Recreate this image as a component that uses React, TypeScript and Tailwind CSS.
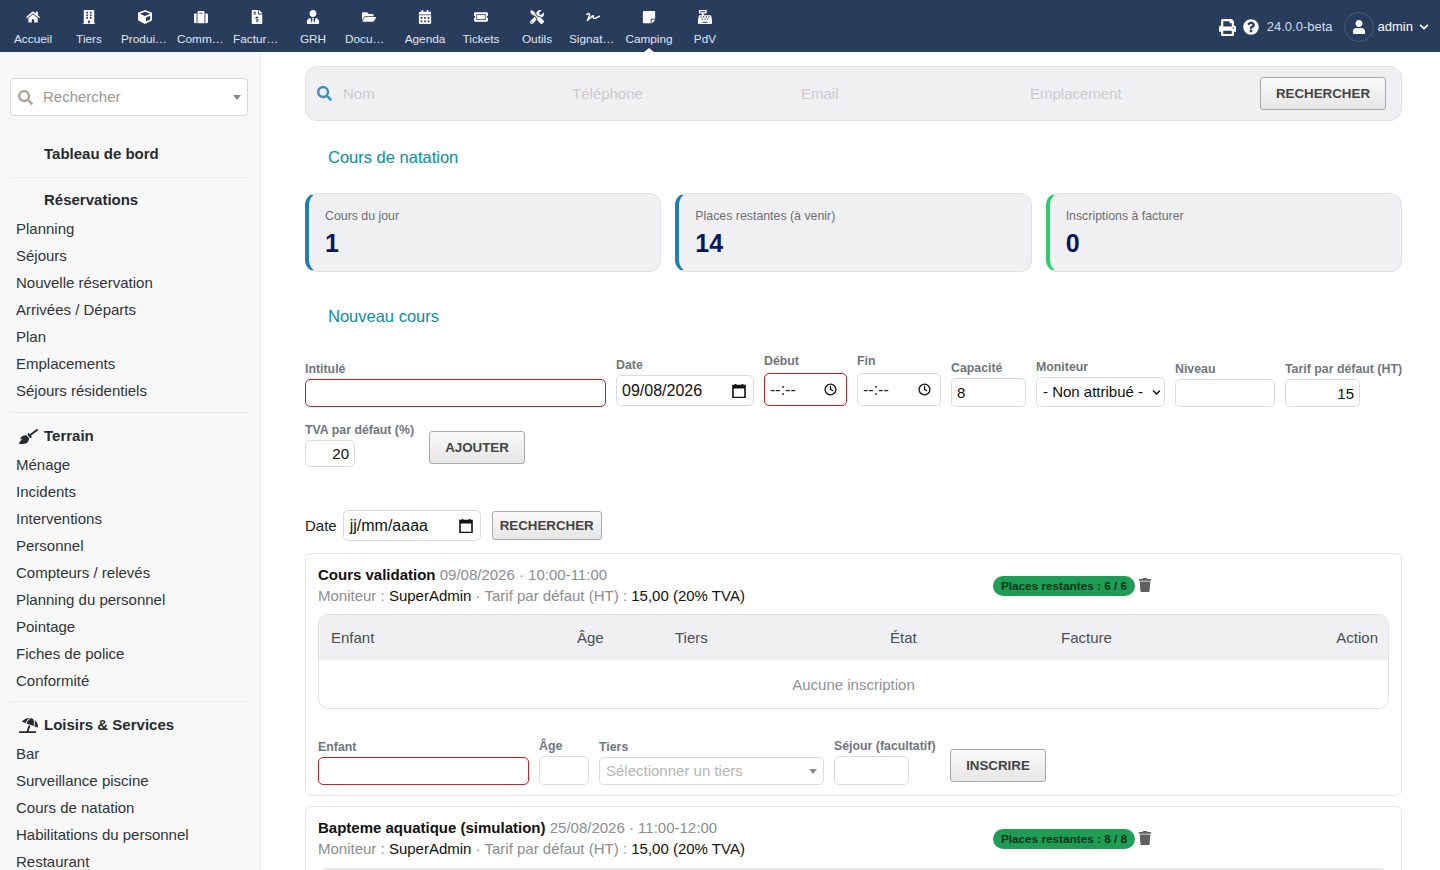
import type { ReactNode } from "react";
import {
  FaHome,
  FaBuilding,
  FaCube,
  FaSuitcase,
  FaFileInvoiceDollar,
  FaUserTie,
  FaFolderOpen,
  FaCalendarAlt,
  FaTicketAlt,
  FaTools,
  FaSignature,
  FaStickyNote,
  FaCashRegister,
  FaPrint,
  FaQuestionCircle,
  FaUser,
  FaSearch,
  FaBroom,
  FaUmbrellaBeach,
  FaTrash,
  FaChevronDown,
} from "react-icons/fa";
import { Clock } from "lucide-react";

const navItems = [
  { label: "Accueil", icon: FaHome },
  { label: "Tiers", icon: FaBuilding },
  { label: "Produi…", icon: FaCube },
  { label: "Comm…", icon: FaSuitcase },
  { label: "Factur…", icon: FaFileInvoiceDollar },
  { label: "GRH", icon: FaUserTie },
  { label: "Docu…", icon: FaFolderOpen },
  { label: "Agenda", icon: FaCalendarAlt },
  { label: "Tickets", icon: FaTicketAlt },
  { label: "Outils", icon: FaTools },
  { label: "Signat…", icon: FaSignature },
  { label: "Camping", icon: FaStickyNote, active: true },
  { label: "PdV", icon: FaCashRegister },
];

const reservations = ["Planning", "Séjours", "Nouvelle réservation", "Arrivées / Départs", "Plan", "Emplacements", "Séjours résidentiels"];
const terrain = ["Ménage", "Incidents", "Interventions", "Personnel", "Compteurs / relevés", "Planning du personnel", "Pointage", "Fiches de police", "Conformité"];
const loisirs = ["Bar", "Surveillance piscine", "Cours de natation", "Habilitations du personnel", "Restaurant"];

const stats = [
  { label: "Cours du jour", value: "1", border: "border-l-[#1f7fb0]" },
  { label: "Places restantes (à venir)", value: "14", border: "border-l-[#1f7fb0]" },
  { label: "Inscriptions à facturer", value: "0", border: "border-l-[#2ecc71]" },
];

const inputBase = "border rounded-[5px] bg-white text-[15px] text-[#111] outline-none";
const okBorder = "border-[#dcdcdc]";
const badBorder = "border-[#c8202a]";
const buttonBase =
  "rounded-[3px] border border-[#a8a8a8] bg-gradient-to-b from-[#fafafa] to-[#e6e6e6] font-bold text-[#444] text-[13.33px]";

function Field({ label, width, children }: { label: string; width: string; children: ReactNode }) {
  return (
    <div className={`flex flex-col ${width}`}>
      <label className="mb-[3px] whitespace-nowrap text-[12.35px] leading-[14px] font-bold text-[#6f7680]">{label}</label>
      {children}
    </div>
  );
}

function MenuGroup({ title, icon, items }: { title: string; icon?: ReactNode; items: string[] }) {
  return (
    <div>
      <div className="flex h-[27px] items-center text-[15px] font-bold text-[#262b33]">
        <span className="flex w-[34px] justify-center pl-[4px] pr-[2px] text-[#262b33]">{icon}</span>
        <span>{title}</span>
      </div>
      <ul className="mt-[2px]">
        {items.map((item) => (
          <li key={item} className="flex h-[27px] items-center pl-[6px] text-[15px] text-[#2f343b]">
            {item}
          </li>
        ))}
      </ul>
    </div>
  );
}

function TimeInput({ invalid }: { invalid?: boolean }) {
  return (
    <div className={`mt-[2px] mb-[1px] flex h-[33px] w-full items-center justify-between border ${invalid ? badBorder : okBorder} rounded-[5px] bg-white pl-[5px] pr-[9px] text-[16px] text-[#222]`}>
      <span>--:--</span>
      <Clock size={13} strokeWidth={2.4} className="text-[#111]" />
    </div>
  );
}

function CalendarIcon() {
  return (
    <svg width="14" height="15" viewBox="0 0 14 15" className="shrink-0">
      <path d="M1 2.5h12v12H1z" fill="none" stroke="#111" strokeWidth="1.6" />
      <path d="M1 2.5h12v3H1z" fill="#111" />
      <path d="M3.5 1v2M10.5 1v2" stroke="#111" strokeWidth="1.6" />
    </svg>
  );
}

function Course({ title, date, places, children }: { title: string; date: string; places: string; children?: ReactNode }) {
  return (
    <section className="mb-[10px] rounded-[6px] border border-[#e6e6e6] bg-white px-[12px] pt-[10px] pb-[10px]">
      <div className="grid grid-cols-[675px_auto]">
        <div className="text-[15px] leading-[21px] text-[#8a8d92]">
          <div>
            <span className="font-bold text-[#111]">{title}</span> {date}
          </div>
          <div>
            Moniteur : <span className="text-[#111]">SuperAdmin</span> · Tarif par défaut (HT) : <span className="text-[#111]">15,00 (20% TVA)</span>
          </div>
        </div>
        <div className="mt-[12px] flex items-start gap-[3px]">
          <span className="flex h-[20px] w-[142px] items-center justify-center rounded-full bg-[#1f9d55] text-[11.75px] font-bold text-[#06351b]">
            Places restantes : {places}
          </span>
          <FaTrash size={14} className="mt-[2px] text-[#5f5f5f]" />
        </div>
      </div>
      {children}
    </section>
  );
}

export default function App() {
  return (
    <div className="flex h-screen flex-col overflow-hidden bg-white font-['Liberation_Sans',Arial,sans-serif]">
      {/* barre du haut */}
      <header className="flex h-[52px] shrink-0 items-start justify-between bg-[#283c5c] pl-[5px]">
        <nav className="flex">
          {navItems.map(({ label, icon: Icon, active }) => (
            <a key={label} className="relative flex h-[52px] w-[56px] flex-col items-center pt-[10px] text-[#e0e6ee]">
              <Icon size={14} className="text-white" />
              <span className={`mt-[8px] w-[48px] whitespace-nowrap text-[11.8px] leading-[14px] ${label.endsWith("…") ? "text-left" : "text-center"}`}>{label}</span>
              {active && <span className="absolute bottom-0 left-1/2 h-0 w-0 -translate-x-1/2 border-x-[5px] border-b-[4px] border-x-transparent border-b-white" />}
            </a>
          ))}
        </nav>
        <div className="flex h-[52px] items-center pt-[2px] pr-[11px] text-[#d5dce6]">
          <FaPrint size={17} className="text-white" />
          <FaQuestionCircle size={16} className="ml-[7px] text-white" />
          <span className="ml-[8px] text-[13px]">24.0.0-beta</span>
          <span className="ml-[11px] flex h-[30px] w-[30px] items-center justify-center rounded-full border border-[#4a5d7c]">
            <FaUser size={14} className="text-white" />
          </span>
          <span className="ml-[4px] text-[13px] text-white">admin</span>
          <FaChevronDown size={10} className="ml-[6px] text-white" />
        </div>
      </header>

      <div className="flex min-h-0 flex-1">
        {/* menu gauche */}
        <aside className="w-[261px] shrink-0 overflow-hidden border-r border-[#f0f0f0] bg-[#f8f8f8] pl-[10px] pr-[12px] pt-[26px]">
          <div className="flex h-[38px] items-center rounded-[4px] border border-[#d9d9d9] bg-white pl-[7px] pr-[6px]">
            <FaSearch size={15} className="text-[#a9a49c]" />
            <span className="ml-[10px] flex-1 text-[15px] text-[#9a9a9a]">Rechercher</span>
            <span className="h-0 w-0 border-x-[4px] border-t-[5px] border-x-transparent border-t-[#888]" />
          </div>
          <div className="mt-[25px] flex h-[27px] items-center pl-[34px] text-[15px] font-bold text-[#262b33]">Tableau de bord</div>
          <div className="mt-[9px] mb-[9px] border-t border-[#ececec]" />
          <MenuGroup title="Réservations" items={reservations} />
          <div className="mt-[7px] mb-[10px] border-t border-[#ececec]" />
          <MenuGroup title="Terrain" icon={<FaBroom size={19} />} items={terrain} />
          <div className="mt-[6px] mb-[10px] border-t border-[#ececec]" />
          <MenuGroup title="Loisirs & Services" icon={<FaUmbrellaBeach size={19} />} items={loisirs} />
        </aside>

        <main className="min-w-0 flex-1 overflow-hidden pt-[14px] pr-[38px] pl-[44px]">
          {/* recherche rapide */}
          <div className="flex h-[55px] items-center rounded-[12px] border border-[#e2e2e4] bg-[#f0f0f2] pl-[11px]">
            <FaSearch size={15} className="shrink-0 text-[#3d8dbd]" />
            <div className="mt-[1px] ml-[11px] flex flex-1">
              {["Nom", "Téléphone", "Email", "Emplacement"].map((p) => (
                <input key={p} placeholder={p} className="w-[229px] bg-transparent text-[15px] outline-none placeholder:text-[#cbcbcd]" />
              ))}
            </div>
            <button className={`${buttonBase} mr-[15px] h-[33px] w-[126px]`}>RECHERCHER</button>
          </div>

          <h2 className="mt-[26px] pl-[23px] text-[16.5px] leading-[20px] text-[#0a8ea0]">Cours de natation</h2>

          <div className="mt-[26px] grid grid-cols-3 gap-[14px]">
            {stats.map((s) => (
              <div key={s.label} className={`h-[79px] rounded-[12px] border border-l-4 border-[#e0e0e2] ${s.border} bg-[#f0f0f2] pt-[14px] pl-[16px]`}>
                <div className="text-[12.35px] leading-[16px] text-[#6b6f76]">{s.label}</div>
                <div className="mt-[4px] text-[25px] leading-[30px] font-bold text-[#0b1560]">{s.value}</div>
              </div>
            ))}
          </div>

          <h2 className="mt-[34px] pl-[23px] text-[16.5px] leading-[20px] text-[#0a8ea0]">Nouveau cours</h2>

          {/* formulaire nouveau cours */}
          <div className="mt-[28px] flex items-end gap-[10px]">
            <Field label="Intitulé" width="w-[301px]">
              <input className={`${inputBase} ${badBorder} h-[28px] w-full`} />
            </Field>
            <Field label="Date" width="w-[138px]">
              <div className={`mb-[1px] flex h-[31px] items-center justify-between rounded-[5px] border ${okBorder} pl-[5px] pr-[7px] text-[16px] text-[#111]`}>
                <span>09/08/2026</span>
                <CalendarIcon />
              </div>
            </Field>
            <Field label="Début" width="w-[83px]">
              <TimeInput invalid />
            </Field>
            <Field label="Fin" width="w-[84px]">
              <TimeInput />
            </Field>
            <Field label="Capacité" width="w-[75px]">
              <input defaultValue="8" className={`${inputBase} ${okBorder} h-[29px] w-full px-[5px]`} />
            </Field>
            <Field label="Moniteur" width="w-[129px]">
              <div className={`flex h-[30px] items-center justify-between rounded-[5px] border ${okBorder} pl-[6px] pr-[3px] text-[15px] text-[#111]`}>
                <span className="whitespace-nowrap">- Non attribué -</span>
                <FaChevronDown size={9} className="text-[#111]" />
              </div>
            </Field>
            <Field label="Niveau" width="w-[100px]">
              <input className={`${inputBase} ${okBorder} h-[28px] w-full`} />
            </Field>
            <Field label="Tarif par défaut (HT)" width="w-[117px]">
              <input defaultValue="15" className={`${inputBase} ${okBorder} h-[28px] w-[75px] px-[5px] text-right`} />
            </Field>
          </div>
          <div className="mt-[16px] flex items-end">
            <Field label="TVA par défaut (%)" width="w-[109px]">
              <input defaultValue="20" className={`${inputBase} ${okBorder} h-[27px] w-[50px] px-[5px] text-right`} />
            </Field>
            <button className={`${buttonBase} ml-[15px] mb-[3px] h-[33px] w-[96px]`}>AJOUTER</button>
          </div>

          {/* filtre par date */}
          <div className="mt-[43px] flex items-center">
            <span className="pt-[1px] text-[15px] text-[#222]">Date</span>
            <div className={`ml-[6px] flex h-[31px] w-[138px] items-center justify-between rounded-[5px] border ${okBorder} pl-[6px] pr-[7px] text-[16px] text-[#111]`}>
              <span>jj/mm/aaaa</span>
              <CalendarIcon />
            </div>
            <button className={`${buttonBase} ml-[11px] h-[29px] w-[110px]`}>RECHERCHER</button>
          </div>

          <div className="mt-[12px]">
            <Course title="Cours validation" date="09/08/2026 · 10:00-11:00" places="6 / 6">
              <div className="mt-[8px] overflow-hidden rounded-[10px] border border-[#e2e2e4]">
                <div className="grid h-[45px] grid-cols-[246px_98px_215px_171px_1fr_auto] items-center bg-[#f0f0f2] pt-[2px] pl-[12px] pr-[10px] text-[15px] text-[#4a4d55]">
                  <span>Enfant</span>
                  <span>Âge</span>
                  <span>Tiers</span>
                  <span>État</span>
                  <span>Facture</span>
                  <span>Action</span>
                </div>
                <div className="flex h-[48px] items-center justify-center pt-[3px] text-[15px] text-[#8e9196]">Aucune inscription</div>
              </div>
              <div className="mt-[30px] flex items-end gap-[10px]">
                <Field label="Enfant" width="w-[211px]">
                  <input className={`${inputBase} ${badBorder} h-[28px] w-full`} />
                </Field>
                <Field label="Âge" width="w-[50px]">
                  <input className={`${inputBase} ${okBorder} h-[29px] w-full`} />
                </Field>
                <Field label="Tiers" width="w-[225px]">
                  <div className={`flex h-[28px] items-center justify-between rounded-[5px] border ${okBorder} pt-[1px] pl-[6px] pr-[6px] text-[15px] text-[#b5b5b5]`}>
                    <span>Sélectionner un tiers</span>
                    <span className="h-0 w-0 border-x-[4px] border-t-[5px] border-x-transparent border-t-[#888]" />
                  </div>
                </Field>
                <Field label="Séjour (facultatif)" width="w-[102px]">
                  <input className={`${inputBase} ${okBorder} h-[29px] w-[75px]`} />
                </Field>
                <button className={`${buttonBase} mb-[3px] ml-[4px] h-[33px] w-[96px]`}>INSCRIRE</button>
              </div>
            </Course>
            <Course title="Bapteme aquatique (simulation)" date="25/08/2026 · 11:00-12:00" places="8 / 8">
              <div className="mt-[9px] h-[40px] rounded-[10px] border border-[#e2e2e4] bg-[#f0f0f2]" />
            </Course>
          </div>
        </main>
      </div>
    </div>
  );
}
